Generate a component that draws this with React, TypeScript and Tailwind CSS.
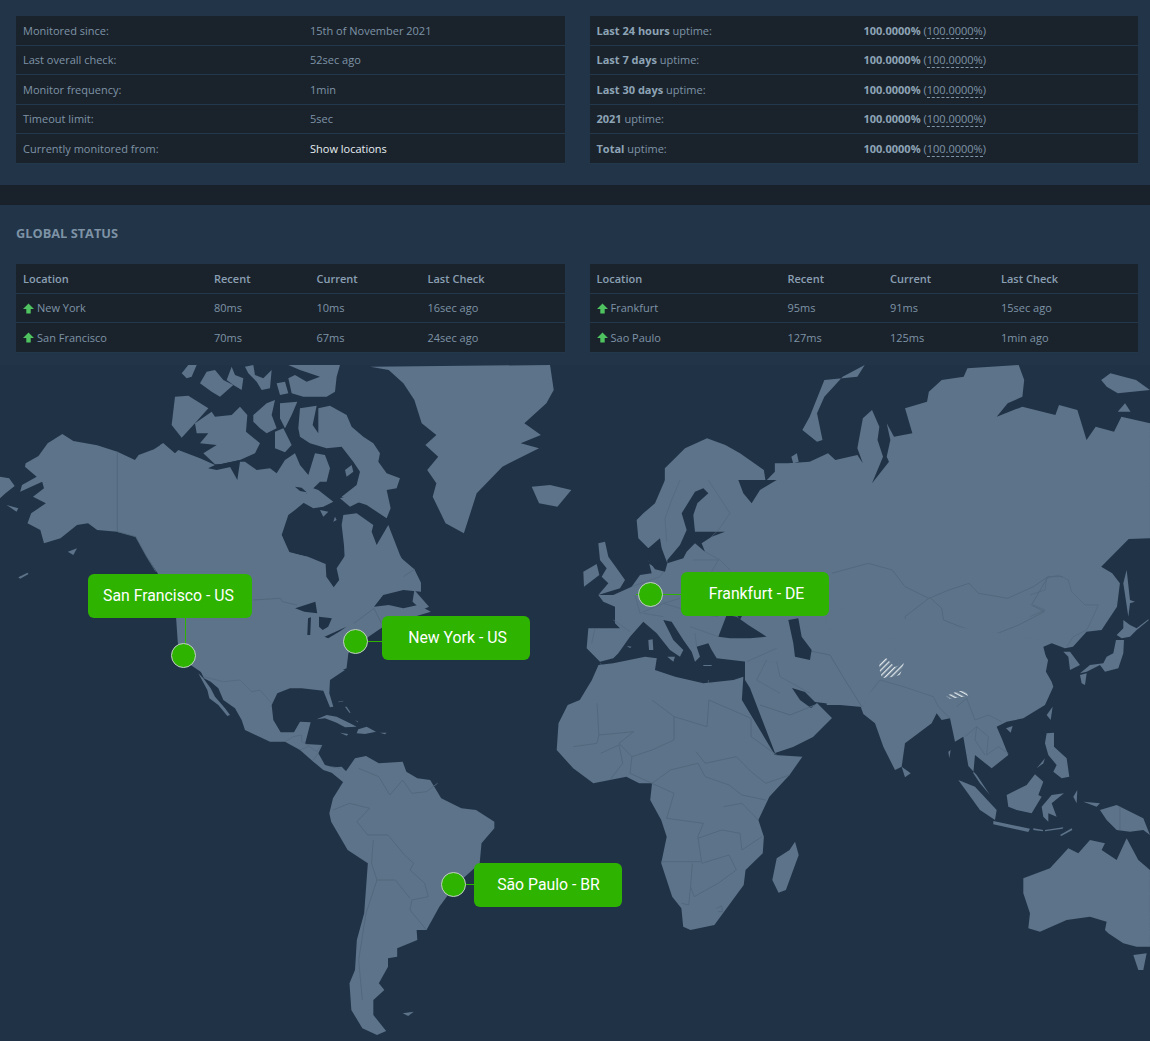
const LAND = "#5d7389";
const SEA = "#203246";
const BORDER = "#51677c";

type Region = { land: string[]; water?: string[]; borders?: string[]; stroke?: number };

// each region is written in the pixel space of one crop of the map
const northAmerica: Region = {
  stroke: 2.6,
  land: [
    "70,310 105,288 130,250 170,222 200,243 265,256 320,275 368,300 378,285 420,268 445,250 475,285 482,290 600,500 768,525 790,578 840,590 888,612 890,650 910,682 925,660 918,625 942,585 960,560 1060,600 1090,590 1130,628 1148,668 1148,695 1100,690 1045,705 1020,740 1060,735 1100,745 1140,735 1175,755 1100,780 1045,800 1005,830 950,880 945,925 905,945 560,945 520,915 485,850 480,770 430,640 400,590 370,530 320,515 265,510 240,490 210,495 165,535 120,550 110,510 75,490 85,460 125,430 90,410 120,385 115,365 55,395 60,375 100,350 68,320",
    "1010,20 1060,30 1100,70 1130,120 1150,190 1190,225 1160,255 1195,290 1165,330 1190,370 1180,410 1215,490 1265,520 1300,400 1370,320 1470,265 1420,250 1475,225 1430,190 1490,130 1510,90 1500,15",
    "1450,380 1500,375 1558,390 1520,440 1470,430",
    "0,350 25,355 40,378 15,400 0,415",
    "18,435 50,445 45,455",
    "185,575 210,565 200,585",
    "50,652 75,638 78,642 55,656",
    "1130,690 1170,740 1150,750 1125,725",
  ],
  water: [
    "805,745 860,725 865,760 830,755",
    "840,775 848,772 846,825 838,825",
    "870,770 905,775 895,800 880,810 870,800",
    "885,830 945,800 925,815 895,835",
  ],
  borders: [
    "320,275 320,515 370,530 400,590 425,635",
    "690,720 765,715 770,725 810,735",
    "965,790 1020,745 1040,790",
    "1100,650 1130,628",
  ],
};

const arctic: Region = {
  stroke: 2,
  land: [
    "0,240 10,235 45,265 55,255 120,280 165,300 145,310 210,305 232,345 240,290 255,290 290,315 330,310 350,325 375,285 405,265 420,300 445,330 465,265 495,270 510,310 500,350 480,350 460,370 475,375 520,410 490,425 460,430 425,410 440,385 405,365 440,375 435,410 405,435 385,450 365,510 385,560 440,575 470,600 0,600",
    "345,200 370,190 395,240 375,262 345,250",
    "545,480 550,450 590,445 640,480 635,500 650,540 685,480 720,570 735,600 555,600 552,540",
    "45,95 85,92 145,130 100,180 65,218 35,180",
    "105,175 155,140 165,155 215,150 240,125 262,150 258,200 300,235 285,265 240,285 185,297 165,298 130,265 170,240 120,235 145,205 110,205",
    "280,150 320,115 345,105 335,150 350,190 320,205 300,190 280,170",
    "360,115 412,110 395,150 375,190 360,160",
    "415,190 420,130 470,122 458,180 475,205 475,130 510,122 560,150 575,185 610,215 640,235 660,265 655,290 680,325 720,340 710,370 680,375 692,430 680,460 620,420 590,410 545,395 590,360 600,320 580,290 545,245 500,250 450,235 420,215",
    "480,435 505,440 490,455",
    "525,455 530,465 520,470",
    "555,315 575,300 580,320 560,335",
    "540,400 590,385 600,410 570,425",
    "65,25 85,0 110,0 95,35 80,40",
    "120,55 140,20 165,15 190,45 220,60 180,95 155,80",
    "200,45 215,5 225,30 250,40 245,75 220,60",
    "255,5 280,0 285,30 310,40 335,15 330,70 305,75 290,50 265,25",
    "350,55 375,50 385,85 360,90",
    "385,0 540,0 530,35 525,80 500,95 430,95 395,85 385,40 405,30 440,50 480,35 420,15",
  ],
  water: ["145,310 180,298 240,285 215,305 170,315", "405,365 425,368 440,382 420,378"],
};

const centralAmerica: Region = {
  stroke: 2,
  land: [
    "30,0 465,0 420,30 418,70 430,110 420,112 400,62 335,55 300,55 262,70 245,105 250,150 272,187 312,187 330,155 362,157 345,222 397,225 385,250 405,285 430,292 455,290 470,305 470,345 425,308 400,300 370,275 330,240 285,215 240,215 165,180 155,150 135,115 100,90 85,55 62,35 42,25",
    "25,10 40,25 62,55 75,80 105,115 120,135 112,138 85,105 58,85 52,60",
    "380,148 410,135 440,140 480,160 500,170 465,172 440,158 405,145",
    "505,178 530,170 558,185 525,192 500,190",
    "450,188 475,192 470,197",
    "570,188 590,188 585,193",
    "445,95 460,92 460,94 445,97",
    "465,110 470,110 482,128 478,128",
    "495,150 505,155 503,157",
  ],
  borders: [
    "40,20 100,35 150,30 185,65 210,60 245,100",
    "285,215 310,200 335,195 335,215 345,220 380,245 395,225",
    "330,240 355,230",
    "370,270 385,250",
    "425,290 450,295",
  ],
};

const eurasia: Region = {
  stroke: 2.6,
  land: [
    "245,365 245,325 300,265 360,235 410,255 450,280 515,330 520,365 445,360 470,385 510,375 545,335 545,310 580,310 640,305 690,280 710,300 770,285 785,310 770,265 785,175 810,150 830,200 825,240 840,290 810,370 860,300 870,340 850,290 860,240 850,190 870,230 920,220 900,145 960,125 965,95 1000,60 1060,50 1070,25 1210,15 1225,60 1220,110 1180,130 1150,170 1220,140 1310,165 1320,135 1370,150 1395,240 1420,200 1470,215 1490,170 1568,190 1568,535 1510,537 1435,620 1465,640 1486,670 1478,740 1436,810 1395,815 1358,860 1336,865 1300,850 1268,865 1282,885 1290,900 1270,1020 700,1020 640,900 560,850 520,830 470,790 420,700 390,520 420,400 340,380",
    "790,15 770,50 680,60 640,170 620,210 660,245 675,240 660,160 680,110 730,50",
    "1435,60 1460,40 1530,60 1568,90 1480,100 1450,80",
    "1480,155 1500,130 1515,155",
    "590,290 605,280 610,305 595,310",
  ],
  borders: [
    "865,630 900,680 965,715 1020,690 1075,670 1100,700 1180,715 1250,680 1290,650 1330,650",
    "970,715 1000,745 1005,780 1050,800 1130,830 1210,795 1280,755 1245,735 1290,650",
    "700,640 800,610 865,630",
    "690,770 800,850 900,815 900,770 965,715",
    "560,840 620,960 720,1000 780,900 830,860 900,815",
    "720,1000 710,960 780,890",
    "840,930 900,990 1010,1010",
  ],
};

const eastAsia: Region = {
  stroke: 2.4,
  land: [
    "0,195 10,222 45,250 70,320 105,390 125,380 135,310 215,250 230,220 245,240 270,235 285,305 310,290 325,378 350,405 390,465 360,430 340,400 345,345 395,385 445,345 425,295 410,260 440,245 490,235 555,195 580,140 575,125 555,90 560,60 545,0 -100,-100 -100,195",
    "125,380 152,400 135,412",
    "295,420 345,440 410,510 405,540 360,510",
    "400,543 510,566 505,576 400,553",
    "520,565 550,570 548,574 520,570",
    "555,570 610,562 608,566 555,574",
    "600,585 635,565 637,570 604,588",
    "440,465 500,435 525,403 550,425 535,465 545,470 515,520 470,510 445,500",
    "545,500 575,465 612,460 575,490 590,530 565,520 565,545 550,530",
    "560,280 582,278 582,320 620,355 628,410 605,415 580,395 590,375 565,345 555,310",
    "530,385 555,355 550,370",
    "720,510 770,495 850,535 870,585 850,570 810,575 770,570 740,540",
    "490,715 570,685 625,625 655,640 690,600 735,610 725,630 770,660 800,595 835,660 870,690 870,920 830,920 790,910 745,880 735,870 740,845 690,830 620,840 540,875 505,865 510,820 490,760",
    "820,945 860,940 850,990 835,990",
    "560,225 578,200 572,240",
    "438,265 458,258 452,278",
    "640,470 652,450 650,490",
    "670,485 720,490 710,500",
    "265,335 272,330 268,355",
  ],
  borders: [
    "20,170 60,120 130,140 220,170 235,200 270,235",
    "290,200 320,175 345,240 385,225 425,245",
    "315,290 350,260 385,290 380,345 415,320 445,340",
    "350,260 345,300 375,345",
    "70,30 0,110",
    "780,500 780,570",
  ],
};

const japan: Region = {
  stroke: 2,
  land: [
    "100,335 120,335 150,375 120,390 115,350",
    "290,90 300,180 315,185 300,190 295,230 280,130",
    "280,240 300,255 320,265 355,238 356,241 320,270 300,290 275,295 260,285 280,265",
    "258,300 282,300 280,340 265,385 225,395 210,375 170,395 150,400 180,375 220,370 230,350 250,340",
    "150,405 170,400 165,435 155,430",
  ],
  borders: [
    "0,165 45,150 50,115 85,105 115,120 125,155 165,195 205,195 185,240 170,270 130,290 110,320",
    "0,230 45,210 10,195",
  ],
};

const europe: Region = {
  stroke: 2,
  land: [
    "255,0 225,70 190,100 170,120 175,175 205,205 240,175 245,205 262,250 255,275 225,268 205,240 215,280 180,285 155,320 100,345 55,345 70,365 105,380 105,430 120,445 25,445 20,505 60,545 100,535 115,520 150,470 190,425 230,460 270,510 300,530 310,510 280,480 250,420 275,425 310,480 335,515 345,545 360,530 350,500 385,490 395,510 410,535 500,545 590,545 720,480 720,0",
    "55,190 75,185 85,230 110,265 135,300 120,325 55,345 85,310 65,290 80,265 60,240",
    "10,275 50,252 58,285 12,320",
    "205,480 218,478 220,510 207,510",
    "140,498 155,500 150,504",
    "370,555 395,555 395,558 370,558",
    "262,530 285,530 280,545",
  ],
  water: [
    "345,35 370,25 385,40 352,70 340,105 345,155 435,155 395,170 365,190 375,215 345,190 320,215 310,235 262,250 262,240 300,195 320,150 305,100",
    "475,0 590,0 540,30 515,70 490,40",
    "205,205 245,205 250,240 225,262 205,250",
    "415,470 440,405 470,410 505,435 560,470 510,475 450,475",
    "470,405 490,400 480,420",
    "625,420 655,415 665,470 695,510 690,540 645,530 640,490",
  ],
  borders: [
    "300,0 275,60 255,115 260,185",
    "385,0 450,100 415,150 395,170",
    "375,215 420,240 450,270",
    "340,240 415,240 395,275",
    "155,320 240,290 250,275",
    "165,345 180,400 250,370 300,385 330,400 415,410",
    "250,370 300,355",
    "190,400 250,410",
    "330,440 415,470",
    "345,460 350,500",
    "45,445 35,490",
    "100,420 150,455",
    "500,545 590,505",
    "590,545 600,590 690,640",
    "560,540 530,600 600,640",
    "195,545 200,580 240,620 215,660",
    "60,550 100,590 105,660",
    "385,600 385,660",
  ],
};

const southAtlantic: Region = {
  stroke: 2.6,
  land: [
    "118,225 150,175 180,168 215,190 280,185 290,215 320,235 355,240 385,295 440,325 480,330 530,365 530,385 495,430 490,490 470,510 420,560 380,620 345,690 318,690 320,720 265,745 265,770 240,775 240,800 215,850 230,870 200,900 200,945 235,993 210,1005 170,985 140,930 135,850 150,810 155,720 175,640 185,490 130,450 85,365 80,340 90,295 118,245",
    "280,940 310,935 295,948",
    "814,-105 854,-110 941,-130 973,-125 968,-90 1023,-70 1100,-50 1182,-60 1209,-70 1205,0 1295,165 1370,170 1335,225 1280,290 1250,360 1265,410 1262,460 1215,510 1210,555 1180,600 1130,675 1065,690 1045,680 1040,625 1015,590 985,490 1000,410 985,360 955,300 960,250 925,250 890,230 800,250 745,205 700,150 705,70 730,15 763,0 796,-60",
    "1350,425 1360,465 1325,570 1305,578 1288,540 1300,475 1335,450",
  ],
  borders: [
    "160,205 215,230 245,285 280,240 305,280 345,275 375,250",
    "90,330 135,310 190,325 155,365 185,405 240,405 285,465 310,490 300,510 340,550 350,590 305,600 300,630 345,690",
    "200,420 195,490 210,540 260,540 300,595",
    "210,540 180,640 160,780 170,900",
    "810,10 815,105 910,95 870,130 905,170 960,150 1020,120 1020,50 960,0",
    "1020,50 1110,80 1115,0 1230,55 1230,110 1300,165",
    "1080,155 1105,190 1190,170 1230,215 1270,250 1335,225",
    "905,170 900,220 960,250 1010,210 1085,190 1105,230 1170,255 1205,285 1270,300",
    "960,250 1020,280 1000,355 1100,370 1085,410 1095,485 985,485",
    "1155,320 1205,310 1250,360",
    "1085,415 1150,390 1200,400 1205,450 1260,410",
    "1095,490 1170,465 1190,510 1140,550 1075,590 1065,560 1070,490",
    "1040,610 1060,615 1065,560",
    "820,160 870,135 880,190 845,240",
    "745,140 810,130 815,105",
    "1135,625 1150,618 1152,635 1140,635",
  ],
};

const Shapes = ({ d }: { d: Region }) => (
  <>
    {d.land.map((p) => (
      <polygon key={p} points={p} fill={LAND} />
    ))}
    {d.water?.map((p) => (
      <polygon key={p} points={p} fill={SEA} />
    ))}
    {d.borders?.map((p) => (
      <polyline key={p} points={p} fill="none" stroke={BORDER} strokeWidth={d.stroke} />
    ))}
  </>
);

function WorldMap() {
  return (
    <svg className="absolute inset-0 w-full h-full" viewBox="0 365 1150 676" preserveAspectRatio="none">
      <defs>
        <pattern id="hatch" width="4" height="4" patternUnits="userSpaceOnUse" patternTransform="rotate(45)">
          <rect width="1.3" height="4" fill="#dfe6ea" />
        </pattern>
        <pattern id="hatch2" width="4" height="4" patternUnits="userSpaceOnUse" patternTransform="rotate(-62)">
          <rect width="1.3" height="4" fill="#dfe6ea" />
        </pattern>
      </defs>
      <g transform="translate(575 360) scale(0.3667 0.3333)">
        <Shapes d={eurasia} />
      </g>
      <g transform="translate(860 640) scale(0.3333 0.3333)">
        <Shapes d={eastAsia} />
      </g>
      <polygon
        points="745,660 745,680 750,688 775,753 793,747 813,737 832,718 817,703 811,708 800,700 792,688 805,692 815,702 840,705 862,707 900,640 800,625 770,660"
        fill={LAND}
      />
      <polyline points="760,705 790,715 815,705" fill="none" stroke={BORDER} strokeWidth="1" />
      <polyline points="805,650 830,655 845,680 862,707" fill="none" stroke={BORDER} strokeWidth="1" />
      <g transform="translate(1030 540) scale(0.3333 0.3333)">
        <Shapes d={japan} />
      </g>
      <g transform="translate(580 480) scale(0.3333 0.3333)">
        <Shapes d={europe} />
      </g>
      <g transform="translate(0 360) scale(0.3667 0.3333)">
        <Shapes d={northAmerica} />
      </g>
      <g transform="translate(160 365) scale(0.3333 0.3333)">
        <Shapes d={arctic} />
      </g>
      <g transform="translate(190 670) scale(0.3333 0.3333)">
        <Shapes d={centralAmerica} />
      </g>
      <g transform="translate(300 700) scale(0.3667 0.3333)">
        <Shapes d={southAtlantic} />
      </g>
      <polygon points="879,662 886,658 895,667 904,663 900,675 892,677 882,678 880,672" fill="url(#hatch)" />
      <polygon points="946,696 958,691 966,691 968,696 950,699" fill="url(#hatch2)" />
    </svg>
  );
}

const font = "font-['Open_Sans',sans-serif] text-[11px]";

function InfoTable({ rows, col }: { rows: [React.ReactNode, React.ReactNode][]; col: string }) {
  return (
    <div className={`flex-1 ${font}`}>
      {rows.map(([a, b], i) => (
        <div key={i} className={`grid ${col} h-[29.5px] items-center px-[7px] pt-[1.5px] bg-[#1a232c] border-b border-[#24384b] text-[#7f93a6]`}>
          <div>{a}</div>
          <div>{b}</div>
        </div>
      ))}
    </div>
  );
}

function Uptime() {
  return (
    <>
      <b className="font-bold text-[#8ea3b6]">100.0000%</b> (
      <span className="border-b border-dashed border-[#7f93a6]">100.0000%</span>)
    </>
  );
}

const UpArrow = () => (
  <svg className="w-[11px] h-[11px] shrink-0" viewBox="0 0 11 11">
    <polygon points="5.5,0.5 11,6 7.7,6 7.7,10.5 3.3,10.5 3.3,6 0,6" fill="#4fc35f" />
  </svg>
);

function StatusTable({ rows }: { rows: string[][] }) {
  const col = "grid grid-cols-[191px_102.5px_111px_1fr] h-[29.5px] items-center px-[7px] pt-[1px] bg-[#1a232c] border-b border-[#24384b]";
  return (
    <div className={`flex-1 ${font}`}>
      <div className={`${col} font-semibold text-[#8a9fb2]`}>
        <div>Location</div>
        <div>Recent</div>
        <div>Current</div>
        <div>Last Check</div>
      </div>
      {rows.map((r) => (
        <div key={r[0]} className={`${col} text-[#7f93a6]`}>
          <div className="flex items-center gap-[3px]">
            <UpArrow />
            {r[0]}
          </div>
          <div>{r[1]}</div>
          <div>{r[2]}</div>
          <div>{r[3]}</div>
        </div>
      ))}
    </div>
  );
}

const Label = ({ children, className }: { children: string; className: string }) => (
  <div className={`absolute flex items-center justify-center rounded-md bg-[#2db300] text-white text-[15.8px] font-['Roboto',sans-serif] ${className}`}>
    {children}
  </div>
);

const Dot = ({ className }: { className: string }) => (
  <div className={`absolute w-[25px] h-[25px] rounded-full bg-[#2db300] border border-[#c4ceca] ${className}`} />
);

const Wire = ({ className }: { className: string }) => <div className={`absolute bg-[#2db300] ${className}`} />;

export default function App() {
  return (
    <div className="h-[1041px] overflow-hidden bg-[#223447]">
      <section className="h-[185px] p-4 pr-3 flex gap-[25px] rounded-b-sm">
        <InfoTable
          col="grid-cols-[287px_1fr]"
          rows={[
            ["Monitored since:", "15th of November 2021"],
            ["Last overall check:", "52sec ago"],
            ["Monitor frequency:", "1min"],
            ["Timeout limit:", "5sec"],
            ["Currently monitored from:", <span className="text-[#e6edf2]">Show locations</span>],
          ]}
        />
        <InfoTable
          col="grid-cols-[267px_1fr]"
          rows={[
            [<><b className="font-bold text-[#8ea3b6]">Last 24 hours</b> uptime:</>, <Uptime />],
            [<><b className="font-bold text-[#8ea3b6]">Last 7 days</b> uptime:</>, <Uptime />],
            [<><b className="font-bold text-[#8ea3b6]">Last 30 days</b> uptime:</>, <Uptime />],
            [<><b className="font-bold text-[#8ea3b6]">2021</b> uptime:</>, <Uptime />],
            [<><b className="font-bold text-[#8ea3b6]">Total</b> uptime:</>, <Uptime />],
          ]}
        />
      </section>
      <div className="h-5 bg-[#19222b]" />
      <section className="px-4 pr-3">
        <h2 className="h-[59px] pt-[20px] font-['Open_Sans',sans-serif] text-[12.8px] leading-[16px] font-bold uppercase text-[#7d92a5]">
          Global Status
        </h2>
        <div className="flex gap-[25px] h-[101px]">
          <StatusTable
            rows={[
              ["New York", "80ms", "10ms", "16sec ago"],
              ["San Francisco", "70ms", "67ms", "24sec ago"],
            ]}
          />
          <StatusTable
            rows={[
              ["Frankfurt", "95ms", "91ms", "15sec ago"],
              ["Sao Paulo", "127ms", "125ms", "1min ago"],
            ]}
          />
        </div>
      </section>
      <div className="relative h-[676px] bg-[#203246]">
        <WorldMap />
        <Wire className="left-[185px] top-[252px] w-px h-[27px]" />
        <Dot className="left-[170.5px] top-[277.5px]" />
        <Label className="left-[88px] top-[209px] w-[164px] h-[44px] pr-[3px]">San Francisco - US</Label>
        <Wire className="left-[367px] top-[276px] w-[16px] h-px" />
        <Dot className="left-[342.5px] top-[263.5px]" />
        <Label className="left-[382px] top-[251px] w-[148px] h-[44px] pl-[3px]">New York - US</Label>
        <Wire className="left-[636px] top-[229px] w-[46px] h-px" />
        <Dot className="left-[637.5px] top-[216.5px]" />
        <Label className="left-[681px] top-[207px] w-[148px] h-[44px] pl-[3px]">Frankfurt - DE</Label>
        <Wire className="left-[465px] top-[519px] w-[10px] h-px" />
        <Dot className="left-[440.5px] top-[506.5px]" />
        <Label className="left-[474px] top-[498px] w-[148px] h-[44px] pl-[1px]">São Paulo - BR</Label>
      </div>
    </div>
  );
}
